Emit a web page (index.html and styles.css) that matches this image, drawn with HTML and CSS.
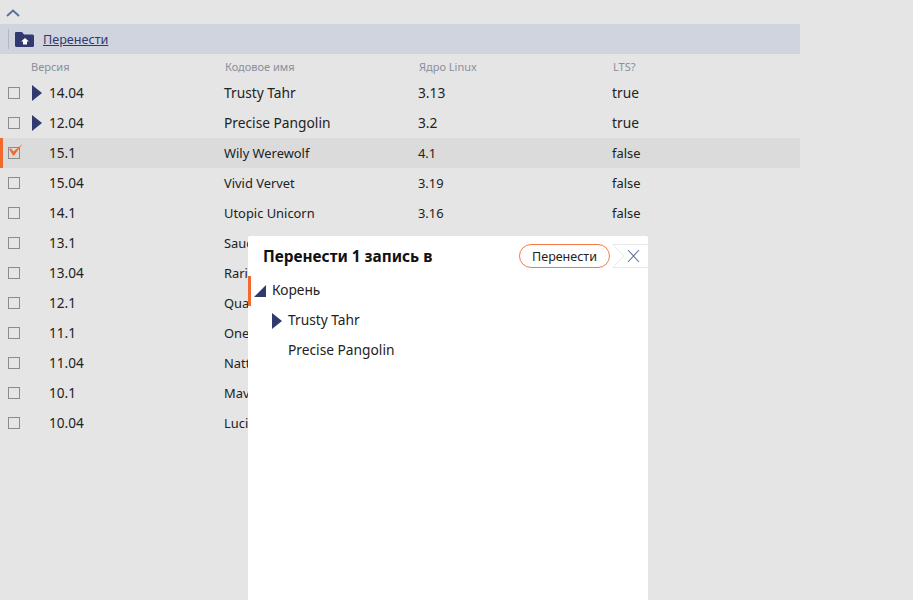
FILE: index.html
```html
<!DOCTYPE html>
<html lang="ru">
<head>
    <meta charset="UTF-8">
    <meta name="viewport" content="width=device-width, initial-scale=1.0">
    <title>Перенос записей</title>
    <link rel="stylesheet" href="styles.css">
</head>
<body>
    <div class="page">
        <div class="collapse">
            <svg width="14" height="8" viewBox="0 0 14 8"><path d="M1 7 L7 1.5 L13 7" fill="none" stroke="#5a7299" stroke-width="2"/></svg>
        </div>
        <div class="toolbar">
            <span class="toolbar-sep"></span>
            <svg class="folder" width="19" height="15" viewBox="0 0 19 15"><path d="M1 0 H7 L9 2.5 H17.5 Q19 2.5 19 4 V13.5 Q19 15 17.5 15 H1.5 Q0 15 0 13.5 V1 Q0 0 1 0 Z" fill="#313a6e"/><path d="M10 6 L14 9.5 H12 V12.5 H8 V9.5 H6 Z" fill="#fff"/></svg>
            <a class="toolbar-link" href="#">Перенести</a>
        </div>
        <div class="table">
            <div class="row head">
                <div></div>
                <div class="head-first">Версия</div>
                <div>Кодовое имя</div>
                <div>Ядро Linux</div>
                <div>LTS?</div>
            </div>
            <div class="row node">
                <div class="cell-check"><span class="check"></span></div>
                <div class="cell-ver"><span class="arrow"></span>14.04</div>
                <div>Trusty Tahr</div>
                <div>3.13</div>
                <div>true</div>
            </div>
            <div class="row node">
                <div class="cell-check"><span class="check"></span></div>
                <div class="cell-ver"><span class="arrow"></span>12.04</div>
                <div>Precise Pangolin</div>
                <div>3.2</div>
                <div>true</div>
            </div>
            <div class="row selected">
                <div class="cell-check"><span class="check">
                    <svg class="tick" width="14" height="12" viewBox="0 0 14 12"><path d="M0 5 L1.8 4.4 L4.6 7.6 L13.5 0 L5 11.5 L4 11.5 Z" fill="#f26a2e"/></svg>
                </span></div>
                <div class="cell-ver">15.1</div>
                <div>Wily Werewolf</div>
                <div>4.1</div>
                <div>false</div>
            </div>
            <div class="row">
                <div class="cell-check"><span class="check"></span></div>
                <div class="cell-ver">15.04</div>
                <div>Vivid Vervet</div>
                <div>3.19</div>
                <div>false</div>
            </div>
            <div class="row">
                <div class="cell-check"><span class="check"></span></div>
                <div class="cell-ver">14.1</div>
                <div>Utopic Unicorn</div>
                <div>3.16</div>
                <div>false</div>
            </div>
            <div class="row">
                <div class="cell-check"><span class="check"></span></div>
                <div class="cell-ver">13.1</div>
                <div>Saucy Salamander</div>
                <div>3.11</div>
                <div>false</div>
            </div>
            <div class="row">
                <div class="cell-check"><span class="check"></span></div>
                <div class="cell-ver">13.04</div>
                <div>Raring Ringtail</div>
                <div>3.8</div>
                <div>false</div>
            </div>
            <div class="row">
                <div class="cell-check"><span class="check"></span></div>
                <div class="cell-ver">12.1</div>
                <div>Quantal Quetzal</div>
                <div>3.5</div>
                <div>false</div>
            </div>
            <div class="row">
                <div class="cell-check"><span class="check"></span></div>
                <div class="cell-ver">11.1</div>
                <div>Oneiric Ocelot</div>
                <div>3.0</div>
                <div>false</div>
            </div>
            <div class="row">
                <div class="cell-check"><span class="check"></span></div>
                <div class="cell-ver">11.04</div>
                <div>Natty Narwhal</div>
                <div>2.6.38</div>
                <div>false</div>
            </div>
            <div class="row">
                <div class="cell-check"><span class="check"></span></div>
                <div class="cell-ver">10.1</div>
                <div>Maverick Meerkat</div>
                <div>2.6.35</div>
                <div>false</div>
            </div>
            <div class="row">
                <div class="cell-check"><span class="check"></span></div>
                <div class="cell-ver">10.04</div>
                <div>Lucid Lynx</div>
                <div>2.6.32</div>
                <div>true</div>
            </div>
        </div>

        <!-- диалог переноса поверх таблицы -->
        <div class="dialog">
            <div class="dialog-head">
                <div class="dialog-title">Перенести 1 запись в</div>
                <button class="btn">Перенести</button>
                <div class="close">
                    <svg class="close-tab" width="36" height="24" viewBox="0 0 36 24"><path d="M36 0.5 H1 L12 12 L1 23.5 H36" fill="#fff" stroke="#e6e8ec" stroke-width="1"/><path d="M16 6 L27 18 M27 6 L16 18" stroke="#5f6f9e" stroke-width="1.1" fill="none"/></svg>
                </div>
            </div>
            <div class="tree">
                <div class="tree-row current">
                    <svg class="tree-open" width="12" height="12" viewBox="0 0 12 12"><path d="M12 0 V12 H0 Z" fill="#313a6e"/></svg>
                    <span class="tree-text">Корень</span>
                </div>
                <div class="tree-row child"><span class="arrow"></span><span class="tree-text">Trusty Tahr</span></div>
                <div class="tree-row child leaf"><span class="tree-text">Precise Pangolin</span></div>
            </div>
        </div>
    </div>
</body>
</html>
```

FILE: styles.css
```css
*{
    margin:0;
    padding:0;
    box-sizing:border-box;
}
html,body{
    height:100%;
    overflow:hidden;
}
body{
    background-color:#e5e5e5;
    font-family:"Noto Sans","Open Sans",sans-serif;
    font-size:13px;
    color:#222;
}
.page{
    position:relative;
    height:600px;
}
.collapse{
    height:24px;
    padding:9px 0 0 6px;
}
.collapse svg{
    display:block;
}
.toolbar{
    width:800px;
    height:30px;
    background-color:#d0d4de;
    display:flex;
    align-items:center;
    padding-left:8px;
}
.toolbar-sep{
    width:1px;
    height:20px;
    background-color:#b4b6bc;
    margin-right:6px;
}
.folder{
    margin-right:9px;
}
.toolbar-link{
    color:#313a6e;
    font-size:12.6px;
}
.table{
    width:800px;
}
.row{
    display:grid;
    grid-template-columns:30px 194px 194px 194px 188px;
    height:30px;
    align-items:center;
    font-size:12.9px;
    line-height:16px;
    color:#222;
}
.row.head{
    height:24px;
    font-size:11px;
    color:#8a8f9c;
    padding-top:2px;
    padding-bottom:1px;
}
.head-first{
    padding-left:1px;
}
.row.head div:nth-child(3),
.row.head div:nth-child(4),
.row.head div:nth-child(5){
    padding-left:1px;
}
.node{
    font-size:13.75px;
}
.node > div{
    margin-bottom:1px;
}
.node > .cell-check{
    margin-bottom:0;
}
.selected{
    background-color:#dbdbdb;
    box-shadow:inset 3px 0 0 #f26a2e;
}
.cell-check{
    padding-left:8px;
    display:flex;
}
.check{
    position:relative;
    display:block;
    width:12px;
    height:12px;
    border:1px solid #8c8c8c;
}
.tick{
    position:absolute;
    left:0;
    top:-4px;
}
.cell-ver{
    display:flex;
    align-items:center;
    padding-left:19px;
    font-size:13.6px;
}
.node .cell-ver{
    padding-left:2px;
    margin-bottom:0;
}
.arrow{
    display:block;
    width:0;
    height:0;
    border-style:solid;
    border-width:8px 0 8px 10px;
    border-color:transparent transparent transparent #313a6e;
    margin-right:7px;
}
.dialog{
    position:absolute;
    left:248px;
    top:236px;
    width:400px;
    height:364px;
    background-color:#fff;
    border-radius:2px 2px 0 0;
}
.dialog-head{
    display:flex;
    align-items:center;
    height:40px;
    padding-left:15px;
}
.dialog-title{
    flex:1;
    font-size:15.4px;
    font-weight:bold;
    color:#111;
}
.btn{
    width:91px;
    height:24px;
    border:1px solid #f47a45;
    border-radius:12px;
    background-color:#fff;
    font-family:inherit;
    font-size:12.5px;
    color:#222;
    margin-right:2px;
}
.close{
    width:36px;
    height:24px;
}
.close-tab{
    display:block;
}
.tree-row{
    display:flex;
    align-items:center;
    height:30px;
    font-size:13.75px;
    line-height:16px;
    color:#222;
}
.tree-text{
    margin-bottom:2px;
}
.current{
    box-shadow:inset 3px 0 0 #f26a2e;
    padding-left:6px;
}
.tree-open{
    margin-right:6px;
}
.child{
    padding-left:24px;
}
.child .arrow{
    margin-right:6px;
}
.leaf{
    padding-left:40px;
}
```
